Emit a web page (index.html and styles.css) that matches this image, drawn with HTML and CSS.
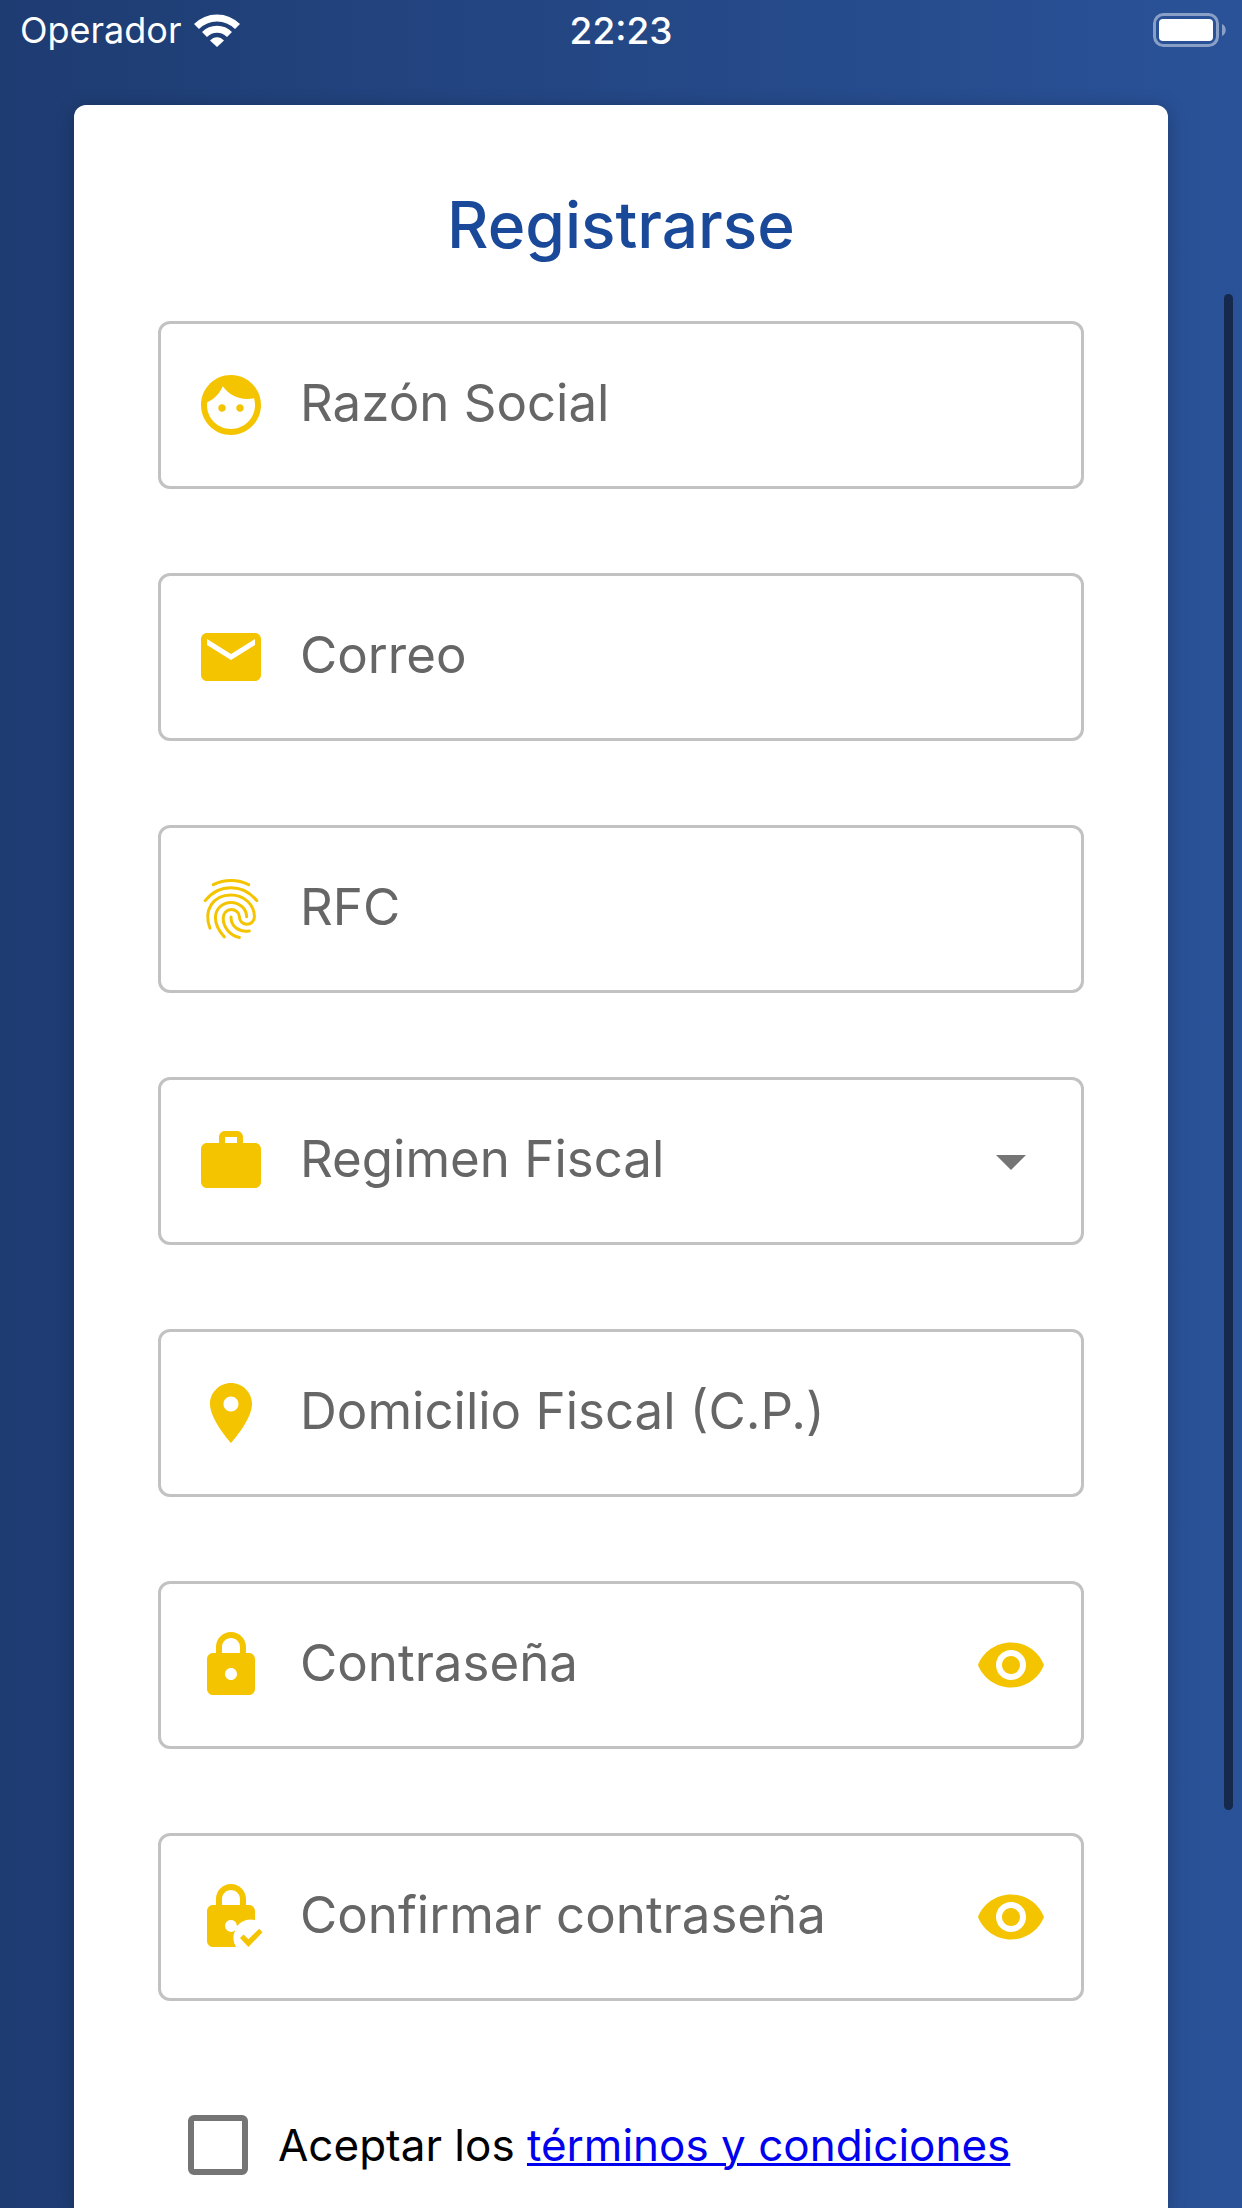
FILE: index.html
```html
<!DOCTYPE html>
<html lang="es">
<head>
  <meta charset="UTF-8">
  <meta name="viewport" content="width=device-width, initial-scale=1.0">
  <title>Registrarse</title>
  <link rel="stylesheet" href="styles.css">
</head>
<body>
  <header class="status-bar">
    <div class="carrier">
      <span>Operador</span>
      <svg class="wifi" viewBox="0 0 46 33" fill="none" stroke="#fff" stroke-width="7">
        <path d="M2.5 12.5C14 1 32 1 43.5 12.5"/>
        <path d="M10.5 20.5C17.5 13.5 28.5 13.5 35.5 20.5"/>
        <path d="M16 26.5C20 22 26 22 30 26.5L23 33z" fill="#fff" stroke="none"/>
      </svg>
    </div>
    <time class="clock">22:23</time>
    <svg class="battery" viewBox="0 0 73 34">
      <rect x="1.5" y="1.5" width="63" height="31" rx="9" fill="none" stroke="#fff" stroke-opacity="0.45" stroke-width="3"/>
      <rect x="6" y="6" width="54" height="22" rx="4" fill="#fff"/>
      <path d="M69 11c5 2 5 10 0 12z" fill="#fff" fill-opacity="0.45"/>
    </svg>
  </header>

  <main class="card">
    <h1 class="title">Registrarse</h1>

    <form class="register-form">
      <div class="field">
        <svg class="icon" viewBox="0 0 24 24"><path d="M9 11.75c-.69 0-1.25.56-1.25 1.25s.56 1.25 1.25 1.25 1.25-.56 1.25-1.25-.56-1.25-1.25-1.25zm6 0c-.69 0-1.25.56-1.25 1.25s.56 1.25 1.25 1.25 1.25-.56 1.25-1.25-.56-1.25-1.25-1.25zM12 2C6.48 2 2 6.48 2 12s4.48 10 10 10 10-4.48 10-10S17.52 2 12 2zm0 18c-4.41 0-8-3.59-8-8 0-.29.02-.58.05-.86 2.36-1.05 4.23-2.98 5.21-5.37C11.07 8.33 14.05 10 17.42 10c.78 0 1.53-.09 2.25-.26.21.71.33 1.47.33 2.26 0 4.41-3.59 8-8 8z"/></svg>
        <div class="control">
          <input type="text" id="razon-social" placeholder=" ">
          <label for="razon-social">Razón Social</label>
        </div>
      </div>

      <div class="field">
        <svg class="icon" viewBox="0 0 24 24"><path d="M20 4H4c-1.1 0-1.99.9-1.99 2L2 18c0 1.1.9 2 2 2h16c1.1 0 2-.9 2-2V6c0-1.1-.9-2-2-2zm0 4l-8 5-8-5V6l8 5 8-5v2z"/></svg>
        <div class="control">
          <input type="email" id="correo" placeholder=" ">
          <label for="correo">Correo</label>
        </div>
      </div>

      <div class="field">
        <svg class="icon icon-line" viewBox="0 0 24 24">
          <path d="M6.1 3.9C9.7 2 14.3 2 17.9 3.9"/>
          <path d="M3.4 9.2C8 3.5 16 3.5 20.6 9.2"/>
          <path d="M5 18.4C2.7 12.5 6 7.3 12 7.3C16.3 7.3 19.8 10.5 19.8 14.6C19.8 16 18.7 17.1 17.3 17.1C15.9 17.1 14.8 16 14.8 14.6C14.8 13.2 13.5 12.2 12.1 12.2C10.6 12.2 9.4 13.4 9.4 15C9.4 18.1 11.6 20.8 14.8 21.5"/>
          <path d="M9.8 21.3C7.8 19.1 6.8 17.2 6.8 14.9C6.8 12 9.1 9.8 12 9.8C14.9 9.8 17.2 12 17.2 14.6"/>
          <path d="M12 14.7C12 17.8 14.5 19.8 18.1 19.3"/>
        </svg>
        <div class="control">
          <input type="text" id="rfc" placeholder=" ">
          <label for="rfc">RFC</label>
        </div>
      </div>

      <div class="field">
        <svg class="icon" viewBox="0 0 24 24"><path d="M20 6h-4V4c0-1.11-.89-2-2-2h-4c-1.11 0-2 .89-2 2v2H4c-1.11 0-2 .89-2 2v11c0 1.11.89 2 2 2h16c1.11 0 2-.89 2-2V8c0-1.11-.89-2-2-2zm-6 0h-4V4h4v2z"/></svg>
        <div class="control">
          <select id="regimen" required>
            <option value="" selected></option>
            <option value="fisica">Persona Física</option>
            <option value="moral">Persona Moral</option>
          </select>
          <label for="regimen">Regimen Fiscal</label>
        </div>
        <svg class="icon arrow" viewBox="0 0 24 24"><path d="M7 10l5 5 5-5z"/></svg>
      </div>

      <div class="field">
        <svg class="icon" viewBox="0 0 24 24"><path d="M12 2C8.13 2 5 5.13 5 9c0 5.25 7 13 7 13s7-7.75 7-13c0-3.87-3.13-7-7-7zm0 9.5c-1.38 0-2.5-1.12-2.5-2.5s1.12-2.5 2.5-2.5 2.5 1.12 2.5 2.5-1.12 2.5-2.5 2.5z"/></svg>
        <div class="control">
          <input type="text" id="domicilio" placeholder=" ">
          <label for="domicilio">Domicilio Fiscal (C.P.)</label>
        </div>
      </div>

      <div class="field">
        <svg class="icon" viewBox="0 0 24 24"><path d="M18 8h-1V6c0-2.76-2.24-5-5-5S7 3.24 7 6v2H6c-1.1 0-2 .9-2 2v10c0 1.1.9 2 2 2h12c1.1 0 2-.9 2-2V10c0-1.1-.9-2-2-2zm-6 9c-1.1 0-2-.9-2-2s.9-2 2-2 2 .9 2 2-.9 2-2 2zM9 8V6c0-1.66 1.34-3 3-3s3 1.34 3 3v2z"/></svg>
        <div class="control">
          <input type="password" id="password" placeholder=" ">
          <label for="password">Contraseña</label>
        </div>
        <button type="button" class="toggle" aria-label="Mostrar contraseña">
          <svg class="icon" viewBox="0 0 24 24"><path d="M12 4.5C7 4.5 2.73 7.61 1 12c1.73 4.39 6 7.5 11 7.5s9.27-3.11 11-7.5c-1.73-4.39-6-7.5-11-7.5zM12 17c-2.76 0-5-2.24-5-5s2.24-5 5-5 5 2.24 5 5-2.24 5-5 5zm0-8c-1.66 0-3 1.34-3 3s1.34 3 3 3 3-1.34 3-3-1.34-3-3-3z"/></svg>
        </button>
      </div>

      <div class="field">
        <svg class="icon" viewBox="0 0 24 24">
          <path d="M18 8h-1V6c0-2.76-2.24-5-5-5S7 3.24 7 6v2H6c-1.1 0-2 .9-2 2v10c0 1.1.9 2 2 2h7.7A6 6 0 0 1 13.4 16.4 2 2 0 1 1 14 15a6 6 0 0 1 6-2V10c0-1.1-.9-2-2-2zM9 8V6c0-1.66 1.34-3 3-3s3 1.34 3 3v2z"/>
          <path d="M15 19l1.2-1.2 1.6 1.6 3.6-3.5 1.1 1.2-4.7 4.9z"/>
        </svg>
        <div class="control">
          <input type="password" id="password-confirm" placeholder=" ">
          <label for="password-confirm">Confirmar contraseña</label>
        </div>
        <button type="button" class="toggle" aria-label="Mostrar confirmación">
          <svg class="icon" viewBox="0 0 24 24"><path d="M12 4.5C7 4.5 2.73 7.61 1 12c1.73 4.39 6 7.5 11 7.5s9.27-3.11 11-7.5c-1.73-4.39-6-7.5-11-7.5zM12 17c-2.76 0-5-2.24-5-5s2.24-5 5-5 5 2.24 5 5-2.24 5-5 5zm0-8c-1.66 0-3 1.34-3 3s1.34 3 3 3 3-1.34 3-3-1.34-3-3-3z"/></svg>
        </button>
      </div>

      <div class="terms">
        <input type="checkbox" id="terms">
        <label for="terms">Aceptar los <a href="#terminos">términos y condiciones</a></label>
      </div>
    </form>
  </main>

  <div class="scroll-thumb"></div>
</body>
</html>
```
FILE: styles.css
```css
*{
  box-sizing: border-box;
}

body{
  margin: 0;
  min-height: 100vh;
  display: flex;
  flex-direction: column;
  background: linear-gradient(to right, #1e3c72, #2a5298);
  font-family: Inter, "Liberation Sans", sans-serif;
}

/* status bar */
.status-bar{
  display: grid;
  grid-template-columns: 1fr auto 1fr;
  align-items: center;
  height: 60px;
  padding: 0 16px;
  color: white;
  font-size: 36px;
}
.carrier{
  display: flex;
  align-items: center;
  gap: 12px;
  padding-left: 4px;
}
.wifi{
  width: 46px;
  height: 33px;
}
.clock{
  font-size: 37px;
  font-weight: 500;
}
.battery{
  width: 73px;
  height: 34px;
  justify-self: end;
}

/* card */
.card{
  flex: 1;
  margin: 45px 74px 0;
  padding: 75px 84px 33px;
  background-color: white;
  border-radius: 12px 12px 0 0;
  box-shadow: 0 3px 18px rgba(0, 0, 0, 0.25);
}
.title{
  margin: 0 0 51px;
  color: #194998;
  font-size: 64px;
  font-weight: 500;
  line-height: 90px;
  text-align: center;
}
.register-form{
  display: flex;
  flex-direction: column;
  gap: 84px;
}

.field{
  display: flex;
  align-items: center;
  height: 168px;
  padding: 0 34px;
  border: 3px solid #c2c2c2;
  border-radius: 12px;
}
.field:focus-within{
  border-color: #194998;
}
.icon{
  display: block;
  flex: none;
  width: 72px;
  height: 72px;
  fill: #f5c400;
}
.icon-line{
  fill: none;
  stroke: #f5c400;
  stroke-width: 1;
  stroke-linecap: round;
}
.arrow{
  fill: #757575;
}

/* the label sits in the same cell as its input */
.control{
  display: grid;
  flex: 1;
  align-items: center;
  min-width: 0;
  margin-left: 33px;
  padding-bottom: 4px;
}
.control input,
.control select,
.control label{
  grid-area: 1 / 1;
  font-size: 51px;
  line-height: 72px;
}
.control input,
.control select{
  width: 100%;
  padding: 0;
  border: none;
  outline: none;
  background: none;
  appearance: none;
  color: black;
  font-family: inherit;
}
.control label{
  color: #666666;
  pointer-events: none;
  white-space: nowrap;
}
.control input:not(:placeholder-shown) + label,
.control select:valid + label{
  visibility: hidden;
}
.toggle{
  padding: 0;
  border: none;
  background: none;
  cursor: pointer;
}

.terms{
  display: flex;
  align-items: center;
  gap: 30px;
  margin-top: 30px;
  padding-left: 30px;
  font-size: 44px;
  line-height: 60px;
}
.terms input{
  flex: none;
  width: 60px;
  height: 60px;
  margin: 0;
  border: 6px solid #757575;
  border-radius: 6px;
  appearance: none;
}
.terms input:checked{
  background-color: #194998;
}
.terms a{
  color: #0000ee;
  text-decoration-thickness: 3px;
}

.scroll-thumb{
  position: fixed;
  top: 294px;
  right: 9px;
  bottom: 398px;
  width: 9px;
  border-radius: 5px;
  background-color: #16284c;
}
```
